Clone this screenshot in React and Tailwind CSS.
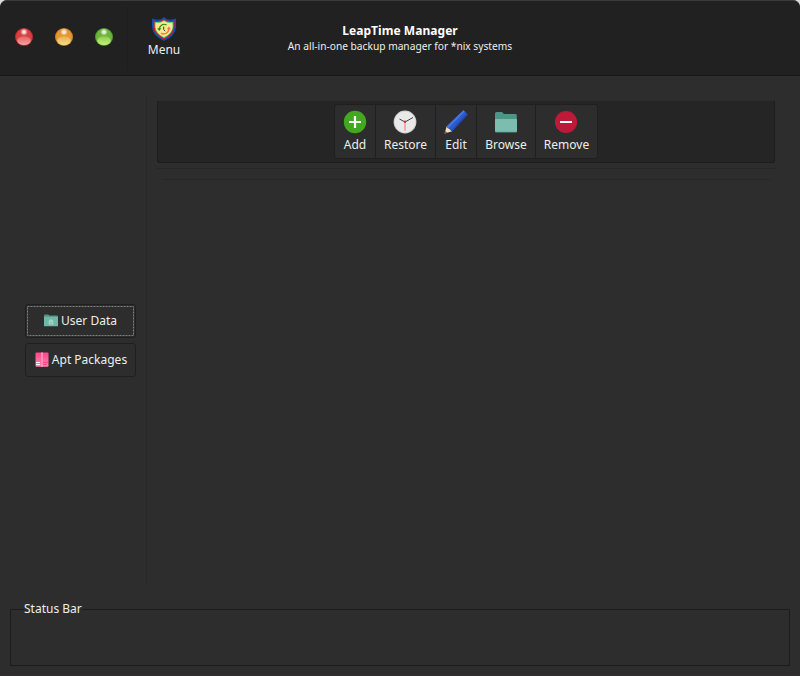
import React from "react";

function Orb({ id, rim, mid, glow }) {
  return (
    <svg width="20" height="20" viewBox="0 0 20 20" aria-hidden="true">
      <defs>
        <linearGradient id={id + "-glow"} x1="0" y1="0" x2="0" y2="1">
          <stop offset="0" stopColor={glow} stopOpacity="0.35" />
          <stop offset="1" stopColor={glow} />
        </linearGradient>
        <radialGradient id={id + "-shine"}>
          <stop offset="0" stopColor="#fff" />
          <stop offset="0.35" stopColor="#fff" stopOpacity="0.75" />
          <stop offset="1" stopColor="#fff" stopOpacity="0" />
        </radialGradient>
      </defs>
      <circle cx="10" cy="10" r="9" fill={rim} />
      <circle cx="10" cy="10" r="8" fill={mid} />
      <ellipse cx="10" cy="13.6" rx="6.8" ry="4.4" fill={`url(#${id}-glow)`} />
      <circle cx="10" cy="5" r="3.8" fill={`url(#${id}-shine)`} />
    </svg>
  );
}

function ShieldIcon() {
  return (
    <svg width="24" height="24" viewBox="0 0 24 24" aria-hidden="true">
      <path d="M12 0L15 2.2Q19 3.4 24 1.6V10Q23.5 19 12 24Q.5 19 0 10V1.6Q5 3.4 9 2.2Z" fill="#0b50b8" />
      <path d="M12 1.8L15 3.6Q19 4.6 22.6 3.4V10Q22 17.8 12 22.4Q2 17.8 1.4 10V3.4Q5 4.6 9 3.6Z" fill="#d01622" />
      <path d="M12 3L15 4.6Q18.5 5.4 21.4 4.7V10Q20.8 17 12 21.2Q3.2 17 2.6 10V4.7Q5.5 5.4 9 4.6Z" fill="#35c96b" />
      <path d="M12 3.9L15 5.4Q18 6.1 20.6 5.6V10Q20 16.4 12 20.3Q4 16.4 3.4 10V5.6Q6 6.1 9 5.4Z" fill="#fbe88a" />
      <path d="M7.4 12.2A4.8 4.8 0 0 1 14.5 7.9" fill="none" stroke="#268524" strokeWidth="1.2" />
      <path d="M5.2 11.3H9.3L7.2 14Z" fill="#268524" />
      <path d="M16.7 11.6A4.8 4.8 0 0 1 9 15.9" fill="none" stroke="#f0704f" strokeWidth="1.3" />
      <path d="M14.8 12.2H18.8L17 9.4Z" fill="#f0704f" />
      <path d="M11.7 9.6V12.5L13.2 14.2" fill="none" stroke="#29366a" strokeWidth="1" />
    </svg>
  );
}

function AddIcon() {
  return (
    <svg width="24" height="24" viewBox="0 0 24 24" aria-hidden="true">
      <circle cx="12" cy="12" r="11.2" fill="#43a722" />
      <path d="M12 6V18M6 12H18" stroke="#fff" strokeWidth="2.2" />
    </svg>
  );
}

function ClockIcon() {
  return (
    <svg width="24" height="24" viewBox="0 0 24 24" aria-hidden="true">
      <circle cx="12" cy="12" r="11.4" fill="#d2d2d2" />
      <circle cx="12" cy="12" r="10.4" fill="#e9e9e9" />
      <path d="M12 12V20.8" stroke="#f2a4a8" strokeWidth="1.8" />
      <path d="M6.5 9L12 12L20 7.5" fill="none" stroke="#404040" strokeWidth="1" />
      <circle cx="12" cy="11.8" r="1.2" fill="#e0313c" />
    </svg>
  );
}

function PencilIcon() {
  return (
    <svg width="24" height="24" viewBox="0 0 24 24" aria-hidden="true">
      <path d="M.6 23.6L2.6 16.6L8.2 21.2Z" fill="#f8dcc0" />
      <path d="M.4 23.8L1.3 20.9L3.4 22.8Z" fill="#666" />
      <path d="M2.6 16.6L19.4 .2L23.8 4.4L8.2 21.2L6.6 20.4L5.7 18.8L3.8 18.3Z" fill="#2b5bd0" />
      <path d="M2.6 16.6L19.4 .2L20.7 1.5L4.2 18.3Z" fill="#4677df" />
      <path d="M7 20.6L22.6 3.3L23.8 4.4L8.2 21.2Z" fill="#214ab5" />
    </svg>
  );
}

function FolderIcon() {
  return (
    <svg width="24" height="24" viewBox="0 0 24 24" aria-hidden="true">
      <path d="M1 3.5Q1 2 2.5 2H7.5Q8.5 2 9.2 3.2L9.8 4H21.5Q22.8 4 22.8 5.4V12H1Z" fill="#4d9687" />
      <rect x="1" y="9" width="22" height="13.5" rx="1" fill="#4d9687" />
      <rect x="1" y="9" width="22" height="12.7" rx="1" fill="#7dbdb0" />
    </svg>
  );
}

function RemoveIcon() {
  return (
    <svg width="24" height="24" viewBox="0 0 24 24" aria-hidden="true">
      <circle cx="12" cy="12" r="11.1" fill="#bd1938" />
      <path d="M6 12H18" stroke="#fff" strokeWidth="2" />
    </svg>
  );
}

function HomeFolderIcon() {
  return (
    <svg width="16" height="16" viewBox="0 0 16 16" aria-hidden="true">
      <path d="M1 2.5Q1 1.5 2 1.5H5.3L6.5 2.5H14Q15 2.5 15 3.5V8H1Z" fill="#4d9687" />
      <rect x="1" y="3.7" width="14" height="9.6" rx="0.6" fill="#72b6a7" />
      <path d="M8 6L10.3 7.8V11.5H5.7V7.8Z" fill="#a5d2c9" />
      <path d="M7.3 9.2H8.7V10.5H7.3Z" fill="#72b6a7" />
    </svg>
  );
}

function PackageIcon() {
  return (
    <svg width="16" height="16" viewBox="0 0 16 16" aria-hidden="true">
      <defs>
        <linearGradient id="pkg" x1="0" y1="0" x2="0" y2="1">
          <stop offset="0" stopColor="#ff4688" />
          <stop offset="1" stopColor="#ff85ae" />
        </linearGradient>
      </defs>
      <rect x="1.5" y="0.5" width="13" height="14.3" rx="1" fill="url(#pkg)" />
      <rect x="7" y="0.5" width="2" height="14.3" fill="#ff8db5" />
      <path d="M2 10.5H6M2 12.5H6" stroke="#fff" strokeWidth="1" />
      <path d="M9 10.5H14M9 12.5H13" stroke="#f64a87" strokeWidth="1" />
    </svg>
  );
}

function ToolButton({ icon, label, className }) {
  return (
    <button className={`flex h-[53px] flex-col items-center pt-[5px] ${className}`}>
      {icon}
      <span className="mt-0.5 pl-px leading-[18px]">{label}</span>
    </button>
  );
}

export default function App() {
  return (
    <div className="h-[676px] w-[800px] bg-[#dcdcdc]">
      <div className="flex h-full flex-col overflow-hidden rounded-t-[7px] border-b border-[#332d2e] bg-[#2d2d2d] font-['Noto_Sans',sans-serif] text-[12px] text-[#eeeeec]">
        <header className="grid h-[76px] shrink-0 grid-cols-[1fr_260px_1fr] rounded-t-[7px] border-t border-b border-t-[#3b3b3b] border-b-[#181818] bg-[#212121]">
          <div className="flex">
            <div className="my-[5px] flex w-[128px] items-center gap-5 border-r border-[#1e1e1e] pb-0.5 pl-[14px]">
              <Orb id="close" rim="#bf2b2d" mid="#d84040" glow="#f2a3a2" />
              <Orb id="minimize" rim="#cd7d28" mid="#e49632" glow="#f0e088" />
              <Orb id="maximize" rim="#4f9a2b" mid="#6cb43a" glow="#c9f07c" />
            </div>
            <button className="flex w-[72px] flex-col items-center pt-4">
              <ShieldIcon />
              <span className="leading-[18px]">Menu</span>
            </button>
          </div>
          <div className="flex flex-col items-center whitespace-nowrap pt-[21px]">
            <h1 className="text-[12px] leading-[17px] font-bold tracking-[0.05px] text-white">LeapTime Manager</h1>
            <p className="text-[10.2px] leading-[14px]">An all-in-one backup manager for *nix systems</p>
          </div>
        </header>

        <div className="flex h-[509px] shrink-0 pt-5">
          <aside className="flex w-[147px] flex-col gap-[5px] border-r border-[#272727] pt-[208px] pl-[25px]">
            <button className="h-[34px] w-[111px] rounded-[3px] border border-[#1f1f1f] p-px">
              <span className="relative flex h-full items-center justify-center gap-0.5 pr-px pb-px">
                <svg className="absolute inset-0" width="107" height="30" aria-hidden="true">
                  <rect x="0.5" y="0.5" width="106" height="29" fill="none" stroke="#808080" strokeDasharray="2 1" />
                </svg>
                <HomeFolderIcon />
                User Data
              </span>
            </button>
            <button className="flex h-[34px] w-[111px] items-center justify-center gap-0.5 rounded-[3px] border border-[#1f1f1f] pb-px whitespace-nowrap">
              <PackageIcon />
              Apt Packages
            </button>
          </aside>
          <main className="w-[628px] pt-[5px] pl-[10px]">
            <div className="flex h-[62px] justify-center rounded-b-[3px] border-x border-b border-[#1c1c1c] bg-[#252525] pt-[3px]">
              <div className="flex h-[55px] w-[264px] rounded-[3px] border border-[#1f1f1f] bg-[#2d2d2d]">
                <ToolButton icon={<AddIcon />} label="Add" className="w-[41px] border-r border-[#1f1f1f] pr-px" />
                <ToolButton icon={<ClockIcon />} label="Restore" className="w-[60px] border-r border-[#1f1f1f] pr-px" />
                <ToolButton icon={<PencilIcon />} label="Edit" className="w-[41px] border-r border-[#1f1f1f] pr-px" />
                <ToolButton icon={<FolderIcon />} label="Browse" className="w-[59px] border-r border-[#1f1f1f] pr-px" />
                <ToolButton icon={<RemoveIcon />} label="Remove" className="w-[61px] pr-px" />
              </div>
            </div>
            <div className="mt-[5px] h-px bg-[#272727]" />
            <div className="mt-[10px] mr-[5px] ml-[5px] h-px bg-[#272727]" />
          </main>
        </div>

        <fieldset className="mx-[10px] mt-[15px] h-[66px] border border-[#1c1c1c] pl-[13px]">
          <legend className="leading-[18px]">Status Bar</legend>
        </fieldset>
      </div>
    </div>
  );
}
